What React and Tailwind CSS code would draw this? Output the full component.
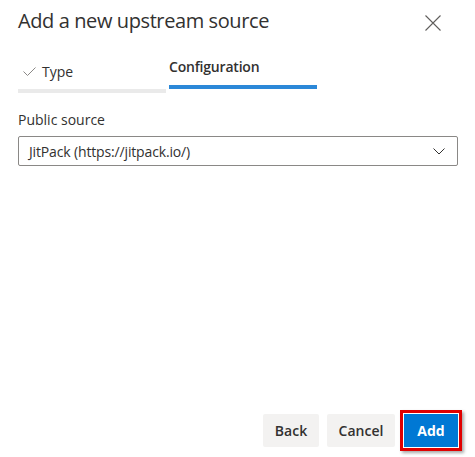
import React from "react";

export default function App() {
  return (
    <div
      className="w-[475px] h-[457px] bg-white flex flex-col text-[#323130] font-['Open_Sans','Noto_Sans',sans-serif]"
    >
      <div className="flex items-start justify-between pl-[18px] pr-[34px] pt-[5px]">
        <h1 className="text-[20px] leading-[32px] font-medium tracking-[-0.4px]">
          Add a new upstream source
        </h1>
        <button className="mt-[10px] w-4 h-4 text-[#605e5c]">
          <svg width="16" height="16" viewBox="0 0 16 16" fill="none" stroke="currentColor" strokeWidth="1.1">
            <path d="M0.5 0.5L15.5 15.5M15.5 0.5L0.5 15.5" />
          </svg>
        </button>
      </div>

      <div className="flex gap-[3px] pl-[18px] mt-[17px]">
        <div className="w-[148px] flex flex-col pt-[5px]">
          <div className="flex items-center h-[24px] text-[14px] text-[#323130]">
            <svg className="ml-[5px] mr-[6px]" width="13" height="9" viewBox="0 0 13 9" fill="none" stroke="#8a8886" strokeWidth="1">
              <path d="M0.5 4.5L4.5 8.5L12.5 0.5" />
            </svg>
            <span>Type</span>
          </div>
          <div className="h-[4px] bg-[#eaeaea] mt-[6px]" />
        </div>
        <div className="w-[148px] flex flex-col">
          <div className="h-[24px] flex items-center text-[14px] font-semibold tracking-[-0.2px] text-[#323130]">
            Configuration
          </div>
          <div className="h-[4px] bg-[#2b88d8] mt-[7px]" />
        </div>
      </div>

      <div className="pr-[17px] pl-[18px] mt-[17px]">
        <div className="text-[14px] leading-[20px] text-[#323130]">Public source</div>
        <div className="mt-[6px] h-[30px] border border-[#8a8886] rounded-[2px] flex items-center justify-between pl-[10px] pr-[12px]">
          <span className="text-[14px] tracking-[-0.15px] text-[#323130]">JitPack (https://jitpack.io/)</span>
          <svg width="12" height="7" viewBox="0 0 12 7" fill="none" stroke="#323130" strokeWidth="1">
            <path d="M0.5 0.5L6 6L11.5 0.5" />
          </svg>
        </div>
      </div>

      <div className="flex-1" />

      <div className="flex justify-end items-center pr-[13px] pb-[6px]">
        <button className="h-[33px] w-[56px] bg-[#f3f2f1] rounded-[2px] text-[14px] font-semibold text-[#323130]">
          Back
        </button>
        <button className="ml-[8px] h-[33px] w-[68px] bg-[#f3f2f1] rounded-[2px] text-[14px] font-semibold text-[#323130]">
          Cancel
        </button>
        <div className="ml-[5px] border-[3px] border-[#e00000] shadow-[2px_2px_3px_rgba(0,0,0,0.35)]">
          <button className="h-[35px] w-[56px] bg-[#0078d4] text-[14px] font-bold text-white border border-white">
            Add
          </button>
        </div>
      </div>
    </div>
  );
}
